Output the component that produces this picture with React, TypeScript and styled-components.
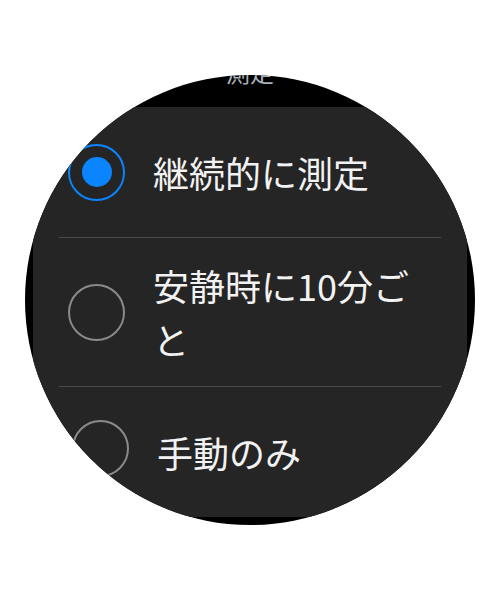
import React from "react";
import styled, { createGlobalStyle } from "styled-components";

const Global = createGlobalStyle`
  html, body { margin: 0; padding: 0; background: #ffffff; }
  body { font-family: "Noto Sans CJK JP", "Noto Sans", sans-serif; }
`;

const Stage = styled.div`
  width: 500px;
  height: 600px;
  display: flex;
  align-items: center;
  justify-content: center;
`;

const Watch = styled.div`
  width: 450px;
  height: 450px;
  border-radius: 50%;
  background: #000000;
  overflow: hidden;
  display: flex;
  flex-direction: column;
`;

const Title = styled.div`
  height: 32px;
  flex-shrink: 0;
  font-size: 24px;
  line-height: 24px;
  color: #a9b1b9;
  text-align: center;
`;

const TitleText = styled.span`
  display: block;
  margin-top: -15px;
`;

const Card = styled.div`
  margin: 0 8px 11px;
  background: #252525;
  border-radius: 24px;
  flex: 1;
  display: flex;
  flex-direction: column;
`;

const Row = styled.div<{ $shift?: number }>`
  display: flex;
  align-items: center;
  min-height: 130px;
  box-sizing: border-box;
  padding: 20px 37px 20px ${(p) => 35 + (p.$shift ?? 0)}px;
  gap: 28px;
`;

const Radio = styled.span<{ $on?: boolean; $lift?: number }>`
  flex-shrink: 0;
  width: 57px;
  height: 57px;
  box-sizing: border-box;
  border-radius: 50%;
  border: 2px solid ${(p) => (p.$on ? "#0a84ff" : "#8a8a8a")};
  display: flex;
  align-items: center;
  justify-content: center;
  margin-top: ${(p) => -2 * (p.$lift ?? 0)}px;
`;

const Dot = styled.span`
  width: 30px;
  height: 30px;
  border-radius: 50%;
  background: #0a84ff;
`;

const Label = styled.span`
  font-size: 36px;
  line-height: 54px;
  color: #f2f2f2;
`;

const Divider = styled.div`
  height: 1px;
  margin: 0 26px;
  background: #4a4a4a;
  flex-shrink: 0;
`;

const options = [
  { label: "継続的に測定", on: true, shift: 0, lift: 0 },
  { label: "安静時に10分ごと", on: false, shift: 0, lift: 0 },
  { label: "手動のみ", on: false, shift: 4, lift: 4 },
];

export default function App() {
  return (
    <>
      <Global />
      <Stage>
        <Watch>
          <Title>
            <TitleText>測定</TitleText>
          </Title>
          <Card>
            {options.map((o, i) => (
              <React.Fragment key={o.label}>
                {i > 0 && <Divider />}
                <Row $shift={o.shift}>
                  <Radio $on={o.on} $lift={o.lift}>
                    {o.on && <Dot />}
                  </Radio>
                  <Label>{o.label}</Label>
                </Row>
              </React.Fragment>
            ))}
          </Card>
        </Watch>
      </Stage>
    </>
  );
}
